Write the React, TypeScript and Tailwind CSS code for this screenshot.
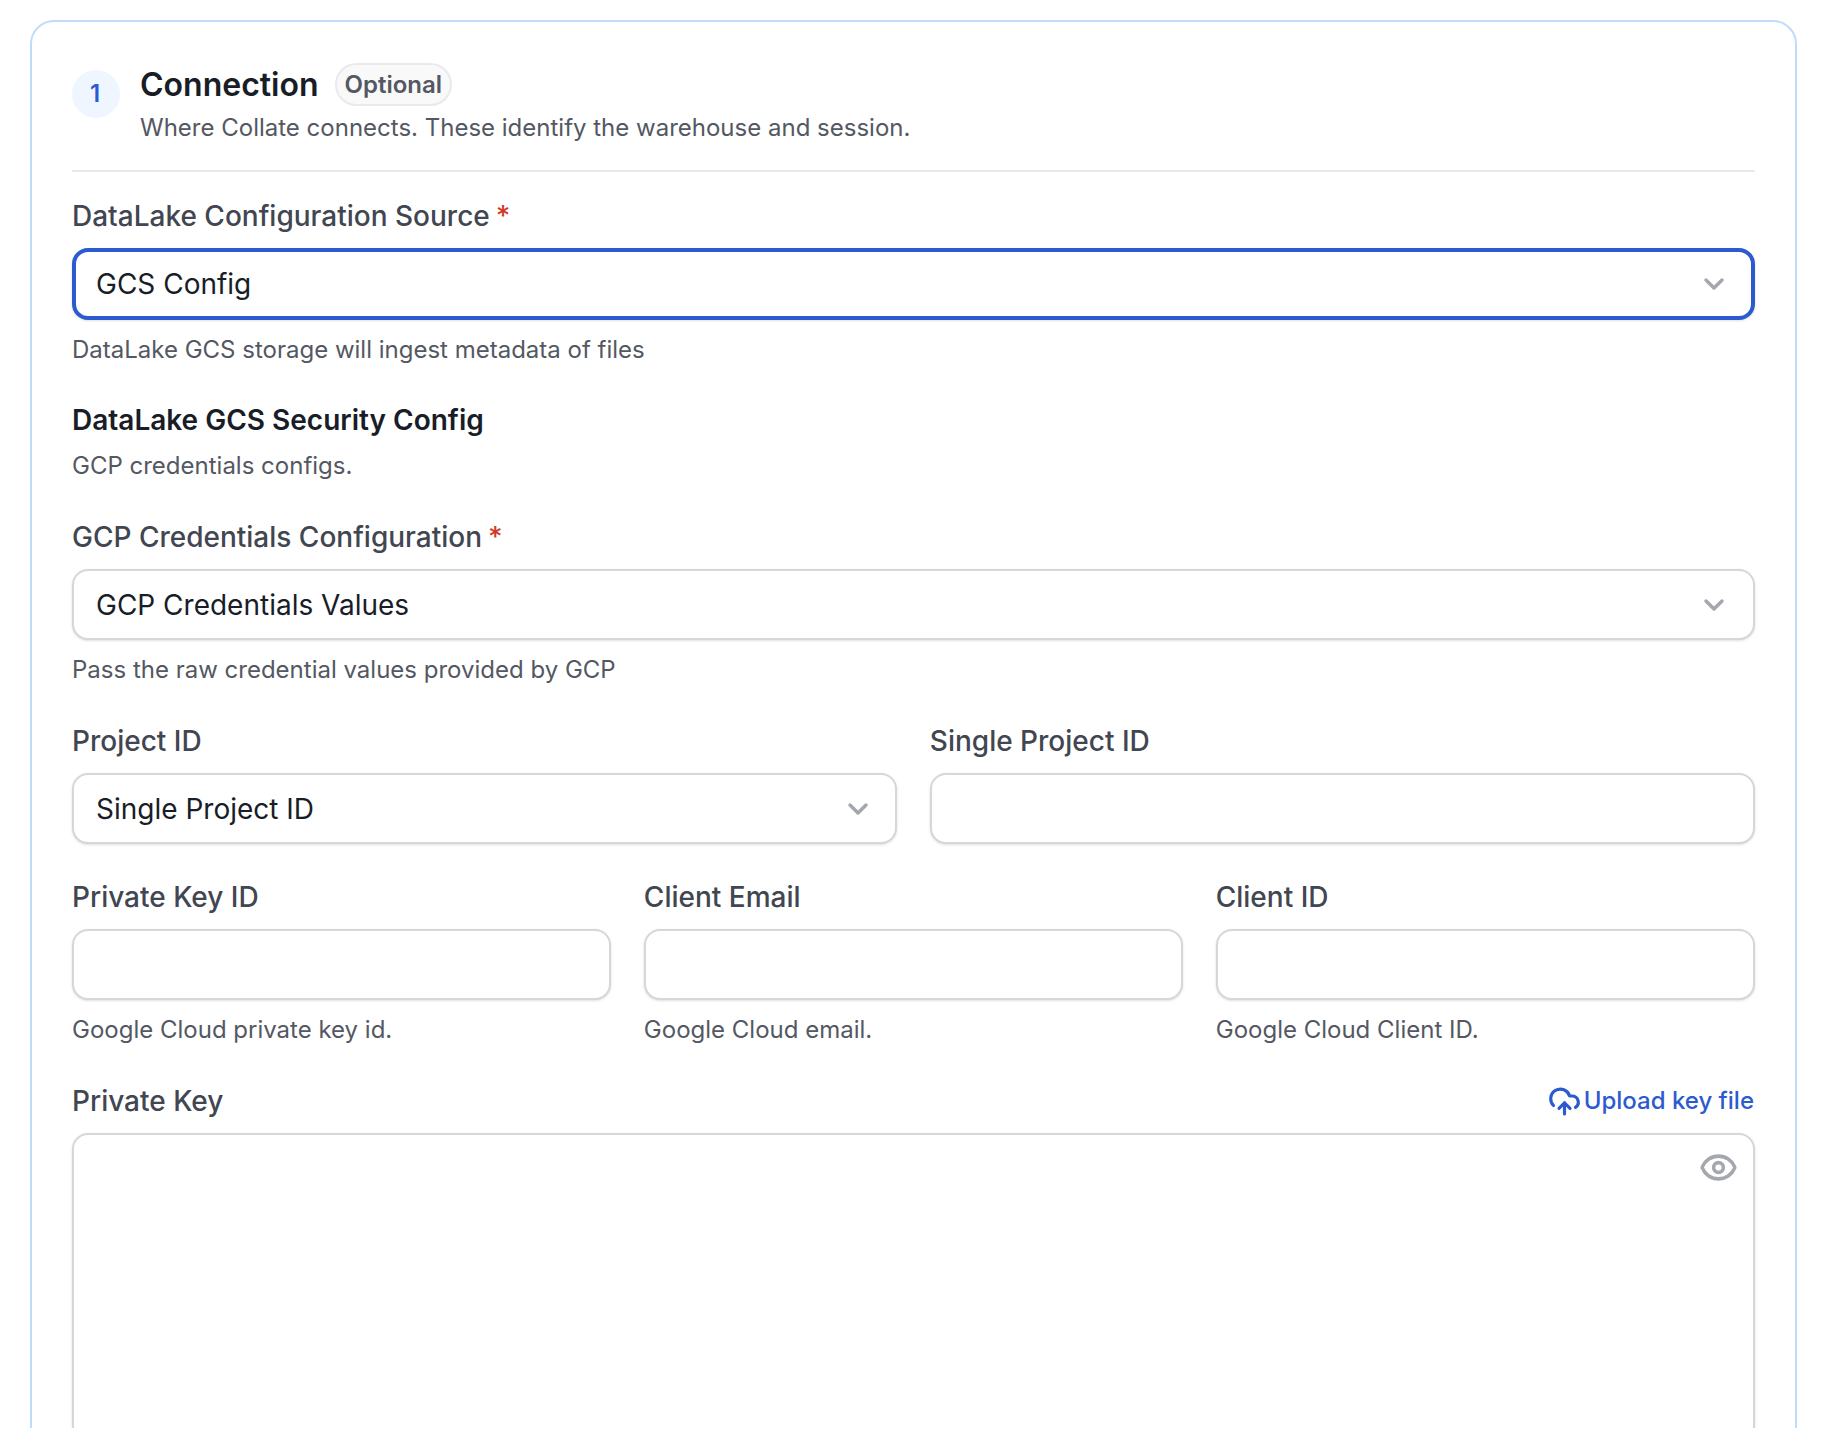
import { ChevronDown, CloudUpload, Eye } from "lucide-react";

function Label({ text, required }: { text: string; required?: boolean }) {
  return (
    <div className="flex items-center h-[32px] pb-[1px] text-[28px] font-medium leading-[32px] text-[#414651]">
      {text}
      {required && <span className="ml-[6px] text-[#d13a2a]">*</span>}
    </div>
  );
}

function Help({ text }: { text: string }) {
  return <p className="mt-[16px] h-[28px] text-[24px] leading-[28px] text-[#535862]">{text}</p>;
}

function Select({ value, focused, half }: { value: string; focused?: boolean; half?: boolean }) {
  let box = "mt-[16px] flex h-[71px] items-center justify-between rounded-[16px] border-2 border-[#d5d7da] bg-white pl-[22px] pr-[23px] shadow-sm";
  if (focused) {
    box = "mt-[16px] flex h-[72px] items-center justify-between rounded-[16px] border-[4px] border-[#2b5bcf] bg-white pl-[20px] pr-[21px] shadow-sm";
  }
  if (half) {
    box = "mt-[16px] flex h-[71px] items-center justify-between rounded-[16px] border-2 border-[#d5d7da] bg-white pl-[22px] pr-[21px] shadow-sm";
  }
  return (
    <div className={box}>
      <span className="text-[28px] text-[#181d27]">{value}</span>
      <ChevronDown className="h-[32px] w-[32px] text-[#a4a7ae]" strokeWidth={2.6} />
    </div>
  );
}

function Input() {
  return <div className="mt-[16px] h-[71px] rounded-[16px] border-2 border-[#d5d7da] bg-white shadow-sm" />;
}

export default function App() {
  return (
    <div className="h-[1446px] bg-white font-['Inter',sans-serif]">
      <div className="h-[1428px] overflow-hidden pl-[30px] pr-[29px] pt-[20px]">
        <div className="min-h-[1500px] rounded-[24px] border-2 border-[#bfdcfb] px-[40px] pt-[42px]">
          <div className="flex gap-[20px]">
            <div className="mt-[6px] flex h-[48px] w-[48px] items-center justify-center rounded-full bg-[#eff6ff] pr-[2px] text-[24px] font-semibold text-[#2b5bcf]">
              1
            </div>
            <div>
              <div className="flex h-[42px] items-center gap-[16px]">
                <span className="text-[32px] font-semibold text-[#181d27]">Connection</span>
                <span className="mb-[2px] rounded-full border-2 border-[#e9eaeb] bg-[#f9f9fa] px-[8px] py-[4px] text-[24px] font-semibold leading-[31px] text-[#535862]">
                  Optional
                </span>
              </div>
              <p className="mt-[6px] text-[24px] leading-[32px] text-[#535862]">
                Where Collate connects. These identify the warehouse and session.
              </p>
            </div>
          </div>
          <div className="mt-[26px] h-[2px] bg-[#e9eaeb]" />

          <div className="mt-[28px]">
            <Label text="DataLake Configuration Source" required />
            <Select value="GCS Config" focused />
            <Help text="DataLake GCS storage will ingest metadata of files" />
          </div>

          <div className="mt-[38px]">
            <div className="h-[36px] text-[28px] font-semibold leading-[36px] text-[#181d27]">DataLake GCS Security Config</div>
            <p className="mt-[14px] h-[28px] text-[24px] leading-[28px] text-[#535862]">GCP credentials configs.</p>
          </div>

          <div className="mt-[41px]">
            <Label text="GCP Credentials Configuration" required />
            <Select value="GCP Credentials Values" />
            <Help text="Pass the raw credential values provided by GCP" />
          </div>

          <div className="mt-[41px] grid grid-cols-2 gap-x-[32.6px]">
            <div>
              <Label text="Project ID" />
              <Select value="Single Project ID" half />
            </div>
            <div>
              <Label text="Single Project ID" />
              <Input />
            </div>
          </div>

          <div className="mt-[37px] grid grid-cols-3 gap-x-[32.6px]">
            <div>
              <Label text="Private Key ID" />
              <Input />
              <Help text="Google Cloud private key id." />
            </div>
            <div>
              <Label text="Client Email" />
              <Input />
              <Help text="Google Cloud email." />
            </div>
            <div>
              <Label text="Client ID" />
              <Input />
              <Help text="Google Cloud Client ID." />
            </div>
          </div>

          <div className="mt-[41px]">
            <div className="flex h-[32px] items-center justify-between">
              <Label text="Private Key" />
              <div className="flex items-center gap-[3px] pr-[1px] text-[24px] font-medium text-[#2b5bcf]">
                <CloudUpload className="h-[33px] w-[33px]" strokeWidth={2.3} />
                Upload key file
              </div>
            </div>
            <div className="mt-[16px] flex h-[400px] justify-end rounded-[16px] border-2 border-[#d5d7da] bg-white pr-[15px] pt-[13px] shadow-sm">
              <Eye className="h-[39px] w-[39px] text-[#a4a7ae]" strokeWidth={2.2} />
            </div>
          </div>
        </div>
      </div>
    </div>
  );
}
